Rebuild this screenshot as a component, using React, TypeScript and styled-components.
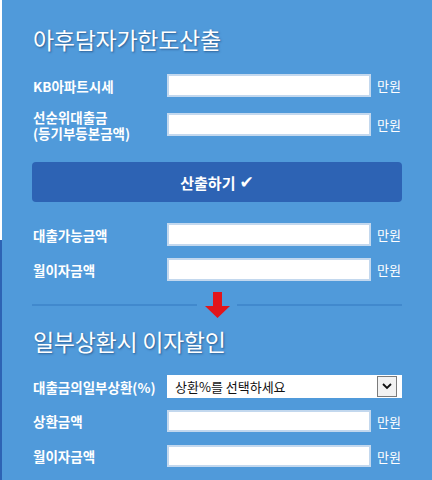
import React from "react";
import styled, { createGlobalStyle } from "styled-components";

const Global = createGlobalStyle`
  html, body { margin: 0; padding: 0; background: #ffffff; }
  body { font-family: "Noto Sans CJK KR", "Noto Sans", sans-serif; }
  * { box-sizing: border-box; }
`;

const Page = styled.div`
  display: flex;
  width: 432px;
  height: 480px;
  overflow: hidden;
`;

const EdgeStrip = styled.div`
  width: 2px;
  flex: none;
  background: linear-gradient(to bottom, #ffffff 0, #ffffff 240px, #2d63b4 240px);
`;

const Panel = styled.div`
  flex: 1;
  background: #509ada;
  padding: 24px 30px 0 30px;
  display: flex;
  flex-direction: column;
`;

const Title = styled.h2<{ $mt?: number }>`
  margin: ${(p) => p.$mt ?? 0}px 0 0 0;
  padding-left: 1px;
  height: 30px;
  font-size: 23px;
  line-height: 30px;
  font-weight: 400;
  color: #ffffff;
  letter-spacing: -0.3px;
  text-shadow: 1px 1px 2px rgba(20, 55, 100, 0.6);
  white-space: nowrap;
`;

const Row = styled.div<{ $mt: number; $h: number }>`
  display: grid;
  grid-template-columns: 135px 204px 1fr;
  align-items: center;
  margin-top: ${(p) => p.$mt}px;
  height: ${(p) => p.$h}px;
`;

const WideRow = styled(Row)`
  grid-template-columns: 135px 1fr;
`;

const Label = styled.label`
  padding-left: 1px;
  color: #ffffff;
  font-size: 13.5px;
  font-weight: 700;
  line-height: 16px;
  white-space: nowrap;
`;

const TextInput = styled.input<{ $h: number }>`
  width: 204px;
  height: ${(p) => p.$h}px;
  border: 2px solid #c3d8ee;
  background: #ffffff;
  padding: 0 4px;
  font-size: 13px;
  outline: none;
  margin: 0;
`;

const Unit = styled.span`
  padding-left: 6px;
  color: #ffffff;
  font-size: 13px;
  line-height: 15px;
  white-space: nowrap;
`;

const CalcButton = styled.button`
  margin-top: 21px;
  height: 40px;
  width: 100%;
  border: none;
  border-radius: 4px;
  background: #2d63b4;
  color: #ffffff;
  font-family: "Noto Sans CJK KR", "Noto Sans", sans-serif;
  font-size: 15px;
  font-weight: 700;
  display: flex;
  align-items: center;
  justify-content: center;
  gap: 4px;
  cursor: pointer;
`;

const Check = styled.span`
  font-family: "DejaVu Sans", sans-serif;
  font-size: 17px;
  line-height: 1;
`;

const Divider = styled.div`
  margin-top: 11px;
  height: 26px;
  display: flex;
  align-items: center;
`;

const DivLine = styled.div`
  flex: 1;
  height: 2px;
  background: #4189cd;
`;

const ArrowBox = styled.div`
  width: 40px;
  height: 26px;
  display: flex;
  justify-content: center;
`;

const SelectBox = styled.div`
  height: 23px;
  background: #ffffff;
  display: flex;
  align-items: center;
  padding: 1px 5px 1px 0;
`;

const Select = styled.select`
  flex: 1;
  height: 21px;
  border: none;
  outline: none;
  background: transparent;
  appearance: none;
  -webkit-appearance: none;
  padding: 0 0 0 8px;
  font-family: "Noto Sans CJK KR", "Noto Sans", sans-serif;
  font-size: 13px;
  color: #111111;
`;

const DropButton = styled.span`
  width: 20px;
  height: 21px;
  border: 1px solid #7b7b7b;
  background: #f2f2f2;
  display: flex;
  align-items: center;
  justify-content: center;
`;

function Arrow() {
  return (
    <svg width="25" height="26" viewBox="0 0 25 26">
      <path d="M8 0 H17 V14 H25 L12.5 26 L0 14 H8 Z" fill="#e3151b" />
    </svg>
  );
}

function Chevron() {
  return (
    <svg width="10" height="7" viewBox="0 0 10 7">
      <path d="M1 1 L5 5 L9 1" fill="none" stroke="#111" strokeWidth="1.8" />
    </svg>
  );
}

export default function App() {
  return (
    <>
      <Global />
      <Page>
        <EdgeStrip />
        <Panel>
          <Title>아후담자가한도산출</Title>
          <Row $mt={20} $h={23}>
            <Label>KB아파트시세</Label>
            <TextInput $h={23} />
            <Unit>만원</Unit>
          </Row>
          <Row $mt={11} $h={33}>
            <Label>
              선순위대출금
              <br />
              (등기부등본금액)
            </Label>
            <TextInput $h={23} />
            <Unit>만원</Unit>
          </Row>
          <CalcButton type="button">
            산출하기 <Check>✔</Check>
          </CalcButton>
          <Row $mt={21} $h={23}>
            <Label>대출가능금액</Label>
            <TextInput $h={23} />
            <Unit>만원</Unit>
          </Row>
          <Row $mt={12} $h={23}>
            <Label>월이자금액</Label>
            <TextInput $h={23} />
            <Unit>만원</Unit>
          </Row>
          <Divider>
            <DivLine />
            <ArrowBox>
              <Arrow />
            </ArrowBox>
            <DivLine />
          </Divider>
          <Title $mt={8}>일부상환시 이자할인</Title>
          <WideRow $mt={19} $h={23}>
            <Label>대출금의일부상환(%)</Label>
            <SelectBox>
              <Select defaultValue="">
                <option value="">상환%를 선택하세요</option>
                <option value="10">10%</option>
                <option value="20">20%</option>
                <option value="30">30%</option>
              </Select>
              <DropButton>
                <Chevron />
              </DropButton>
            </SelectBox>
          </WideRow>
          <Row $mt={12} $h={22}>
            <Label>상환금액</Label>
            <TextInput $h={22} />
            <Unit>만원</Unit>
          </Row>
          <Row $mt={13} $h={22}>
            <Label>월이자금액</Label>
            <TextInput $h={22} />
            <Unit>만원</Unit>
          </Row>
        </Panel>
      </Page>
    </>
  );
}
